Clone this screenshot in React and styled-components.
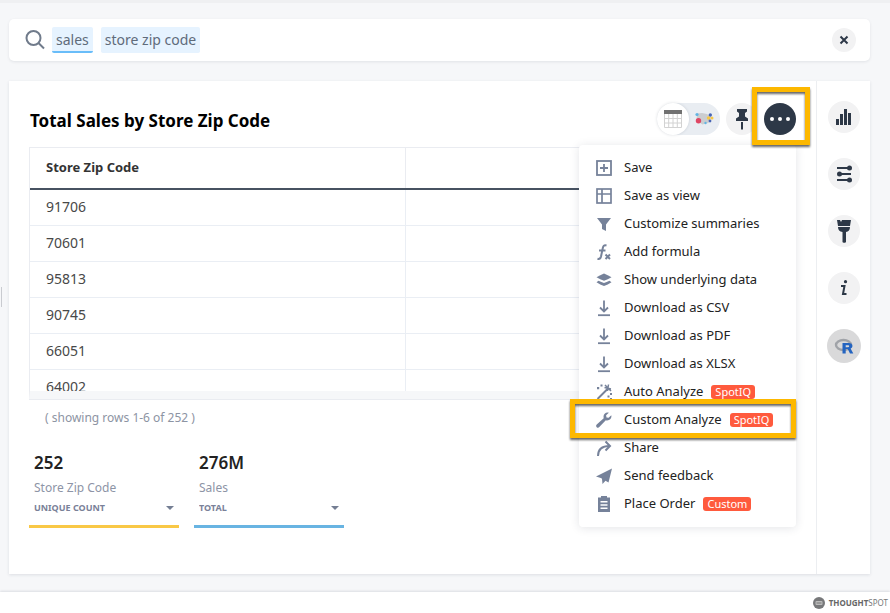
import React from "react";
import styled, { createGlobalStyle, css } from "styled-components";

const Global = createGlobalStyle`
  *, *::before, *::after { box-sizing: border-box; }
  body { margin: 0; background: #f6f7f9; font-family: "Noto Sans", "Open Sans", sans-serif; color: #222; }
  button, input, select { font: inherit; color: inherit; margin: 0; padding: 0; border: 0; background: none; }
`;

const dark = "#2d3847";
const slate = "#76829a";

const Page = styled.div`
  display: flex;
  flex-direction: column;
  min-height: 100vh;
  border-top: 3px solid #eff0f2;
  position: relative;
`;

const SearchBar = styled.form`
  display: flex;
  align-items: center;
  gap: 8px;
  height: 42px;
  margin: 16px 20px 0 9px;
  padding: 0 14px 0 16px;
  background: #fff;
  border-radius: 5px;
  box-shadow: 0 1px 3px rgba(40, 50, 70, 0.1);
`;

const Tokens = styled.div`
  display: flex;
  gap: 8px;
  margin-left: -1px;
`;

const Token = styled.span`
  height: 26px;
  padding: 1px 4px 0;
  font-size: 14px;
  line-height: 24px;
  color: #5f6b7b;
  background: #e6f3ff;
  border-radius: 2px;
  border-bottom: 2px solid ${(p) => (p.$active ? "#69bdf9" : "#e6f3ff")};
`;

const SearchInput = styled.input`
  flex: 1;
  min-width: 0;
  height: 26px;
  font-size: 14px;
  outline: none;
`;

const RoundButton = styled.button`
  display: flex;
  align-items: center;
  justify-content: center;
  flex: none;
  width: ${(p) => p.$size || 32}px;
  height: ${(p) => p.$size || 32}px;
  border-radius: 50%;
  background: ${(p) => p.$bg || "#f2f2f3"};
  color: ${dark};
  position: relative;
`;

const Card = styled.div`
  display: flex;
  flex: 1;
  margin: 20px 20px 18px 9px;
  background: #fff;
  box-shadow: 0 1px 3px rgba(40, 50, 70, 0.12);
`;

const Main = styled.main`
  flex: 1;
  min-width: 0;
  padding: 22px 20px 0;
`;

const Rail = styled.aside`
  display: flex;
  flex-direction: column;
  align-items: center;
  gap: 25px;
  width: 54px;
  padding-top: 20px;
  border-left: 1px solid #eceef1;
`;

const Header = styled.header`
  display: flex;
  align-items: center;
  justify-content: space-between;
  height: 32px;
`;

const Title = styled.h1`
  margin: 0 0 0 1px;
  padding-top: 4px;
  font-size: 17px;
  line-height: 28px;
  font-weight: 700;
  color: #000;
`;

const Actions = styled.div`
  display: flex;
  gap: 6px;
  position: relative;
`;

const Toggle = styled.div`
  display: flex;
  width: 63px;
  height: 32px;
  border-radius: 16px;
  background: #e9edf2;
`;

const ToggleSide = styled.button`
  display: flex;
  align-items: center;
  justify-content: center;
  width: 32px;
  height: 32px;
  border-radius: 50%;
  ${(p) =>
    p.$on &&
    css`
      background: #fff;
      box-shadow: 0 0 3px rgba(40, 50, 70, 0.16);
    `}
`;

const callout = css`
  content: "";
  position: absolute;
  border: 5px solid #fdb800;
  filter: drop-shadow(0 2px 1px rgba(0, 0, 0, 0.6));
  pointer-events: none;
`;

const MoreButton = styled(RoundButton)`
  z-index: 3;
  color: #fff;
  background: ${dark};
  &::before {
    content: "";
    position: absolute;
    inset: -12px -10px -6px -8px;
    background: #fff;
    z-index: -2;
  }
  &::after {
    ${callout}
    inset: -16px -14px -10px -12px;
  }
`;

const MoreDot = styled.span`
  position: absolute;
  inset: 0;
  z-index: -1;
  border-radius: 50%;
  background: ${dark};
`;

const Menu = styled.ul`
  position: absolute;
  z-index: 2;
  top: 42px;
  right: 0;
  width: 217px;
  margin: 0;
  padding: 9px 0;
  list-style: none;
  background: #fff;
  border-radius: 4px;
  box-shadow: 0 1px 10px rgba(40, 50, 70, 0.13);
`;

const MenuEntry = styled.li`
  position: relative;
  ${(p) =>
    p.$marked &&
    css`
      z-index: 1;
      &::after {
        ${callout}
        inset: -7px 0 -4px -9px;
      }
    `}
`;

const MenuButton = styled.button`
  display: flex;
  align-items: center;
  width: 100%;
  height: 28px;
  padding-left: 16px;
  font-size: 13px;
  line-height: 18px;
  text-align: left;
  white-space: nowrap;
  svg { flex: none; color: ${slate}; margin-right: 11px; }
`;

const MenuLabel = styled.span`
  padding-bottom: 2px;
`;

const Badge = styled.span`
  margin-left: 8px;
  padding: 0 4px;
  font-size: 11px;
  line-height: 14px;
  color: #fff;
  background: #ff5a3d;
  border-radius: 3px;
`;

const TableFrame = styled.div`
  height: 252px;
  margin: 12px 15px 0 0;
  border: 1px solid #eaecf1;
  border-bottom: 8px solid #f6f7f9;
  box-shadow: 0 1px 0 #eaecf1;
  overflow: hidden;
`;

const Table = styled.table`
  width: 100%;
  table-layout: fixed;
  border-collapse: collapse;
`;

const HeadCell = styled.th`
  height: 41px;
  padding: 0 16px 3px;
  text-align: left;
  font-size: 13px;
  font-weight: 700;
  color: #333;
  border-bottom: 2px solid #475261;
  & + & { border-left: 1px solid #eaecf1; }
`;

const Cell = styled.td`
  height: 36px;
  padding: 0 16px 1px;
  font-size: 14px;
  line-height: 20px;
  color: #484848;
  border-bottom: 1px solid #eaeef4;
  & + & { border-left: 1px solid #eaeef4; }
`;

const RowNote = styled.p`
  margin: 9px 0 0 16px;
  font-size: 12px;
  line-height: 20px;
  color: #8d94a3;
`;

const Metrics = styled.div`
  display: flex;
  gap: 15px;
  margin-top: 22px;
`;

const Metric = styled.section`
  display: flex;
  flex-direction: column;
  width: 150px;
  padding: 0 5px 9px;
  border-bottom: 3px solid ${(p) => p.$color};
`;

const MetricValue = styled.strong`
  font-size: 17px;
  line-height: 26px;
  font-weight: 600;
  color: #222;
`;

const MetricLabel = styled.label`
  font-size: 12px;
  line-height: 22px;
  margin-top: 1px;
  color: #8d94a6;
`;

const SelectWrap = styled.div`
  display: flex;
  align-items: center;
  color: #747e93;
`;

const Select = styled.select`
  appearance: none;
  flex: 1;
  height: 17px;
  font-size: 9px;
  line-height: 17px;
  font-weight: 700;
  color: #7a8198;
`;

const Footer = styled.footer`
  display: flex;
  align-items: center;
  justify-content: flex-end;
  gap: 4px;
  height: 21px;
  padding-right: 2px;
  background: #fff;
  box-shadow: 0 -1px 2px rgba(40, 50, 70, 0.12);
  font-size: 8px;
  line-height: 20px;
  color: #77787a;
`;

const Brand = styled.b`
  font-weight: 700;
  color: #666;
`;

const Light = styled.span`
  font-weight: 400;
`;

const Handle = styled.div`
  position: absolute;
  left: 1px;
  top: 284px;
  width: 1px;
  height: 20px;
  background: #c9cbd0;
`;

const Svg = ({ s = 18, box = 18, children }) => (
  <svg width={s} height={s} viewBox={`0 0 ${box} ${box}`} fill="currentColor" aria-hidden="true">
    {children}
  </svg>
);

const stroke = { fill: "none", stroke: "currentColor", strokeWidth: 2 };

const icons = {
  save: (
    <g {...stroke} strokeWidth="1.8">
      <rect x="2" y="2" width="14" height="14" />
      <path d="M9 5v8M5 9h8" />
    </g>
  ),
  view: (
    <g {...stroke} strokeWidth="1.7">
      <rect x="2" y="2" width="14" height="14" />
      <path d="M7 2v14M2 7h14" />
    </g>
  ),
  filter: <path d="M2 3h14l-5 6.500V16l-4-2V9.500z" />,
  formula: (
    <g {...stroke}>
      <path d="M11.500 2.500C8.900 1.800 8.300 3 7.800 5L6 13.500c-.5 2-1.500 2.800-3.500 2.300M4 7.500h6.500" />
      <path d="M10.500 11.500l4.500 4.500M15 11.500L10.500 16" />
    </g>
  ),
  layers: (
    <g>
      <path d="M9 2.500c2.500 1 5 2.200 7.500 3.700C14 7.700 11.500 9 9 9.700 6.500 9 4 7.700 1.500 6.200 4 4.700 6.500 3.500 9 2.500z" />
      <path d="M3.500 9.800C5.500 10.800 7.300 11.600 9 12c1.700-.4 3.500-1.200 5.500-2.200l2 1.400c-2.500 1.700-5 3-7.500 3.800-2.500-.8-5-2.100-7.500-3.800z" />
    </g>
  ),
  download: (
    <g {...stroke}>
      <path d="M9 1.500v10.500M5 8.500l4 4 4-4" strokeWidth="1.800" />
      <path d="M3 16.200h12" strokeWidth="1.800" />
    </g>
  ),
  wand: (
    <g>
      <path d="M2.500 16L13 5.500" {...stroke} />
      <path d="M9.500 4.500L16 6M13.500 1.500L12.500 8M10 2l6 6" fill="none" stroke="currentColor" strokeWidth="1.500" />
      <path d="M2 4h2.200v2.200H2zM5.500 1.500h2v2h-2zM12.500 12.500h2v2h-2zM15 10h2v2h-2zM15 15h2v2h-2z" />
    </g>
  ),
  wrench: (
    <path d="M16.300 4.200l-2.700 2.600-2.100-.4-.4-2.100 2.700-2.600c-2.600-.8-5.400 1-5.300 4l.2 1.500-7 6.300c-.8.8-.8 1.900 0 2.700.8.700 1.900.7 2.600-.1l6.500-6.900c3.300.9 6.300-1.800 5.500-5z" />
  ),
  share: (
    <g {...stroke}>
      <path d="M3 17c0-6 2.500-10 11.500-10" />
      <path d="M10.500 2.500L15 7l-4.500 4.500" />
    </g>
  ),
  send: <path d="M17 1.500L1 9.500l5.500 1.700L7 12l.5 5 3-3.200 3 1.700z" />,
  order: (
    <path fillRule="evenodd" d="M3 2.500h3V1h6v1.500h3V17H3zM5.500 6v1.500h7V6zm0 3.200v1.500h7V9.200zm0 3.200v1.500h7v-1.500z" />
  ),
};

const items = [
  ["save", "Save"],
  ["view", "Save as view"],
  ["filter", "Customize summaries"],
  ["formula", "Add formula"],
  ["layers", "Show underlying data"],
  ["download", "Download as CSV"],
  ["download", "Download as PDF"],
  ["download", "Download as XLSX"],
  ["wand", "Auto Analyze", "SpotIQ"],
  ["wrench", "Custom Analyze", "SpotIQ", true],
  ["share", "Share"],
  ["send", "Send feedback"],
  ["order", "Place Order", "Custom"],
];

const zips = ["91706", "70601", "95813", "90745", "66051", "64002"];

const metrics = [
  { id: "zip", value: "252", label: "Store Zip Code", mode: "UNIQUE COUNT", color: "#f9c846" },
  { id: "sales", value: "276M", label: "Sales", mode: "TOTAL", color: "#68b4e2" },
];

export default function App() {
  return (
    <Page>
      <Global />
      <SearchBar onSubmit={(e) => e.preventDefault()}>
        <Svg s={20} box={20}>
          <g fill="none" stroke="#707b8b" strokeWidth="2">
            <circle cx="8.500" cy="8" r="7" />
            <path d="M13.500 13l5.500 5.500" />
          </g>
        </Svg>
        <Tokens>
          <Token $active>sales</Token>
          <Token>store zip code</Token>
        </Tokens>
        <SearchInput aria-label="Search" />
        <RoundButton type="button" $size={24} aria-label="Clear search">
          <Svg s={10} box={10}>
            <path d="M1.500 1.500l7 7M8.500 1.500l-7 7" {...stroke} />
          </Svg>
        </RoundButton>
      </SearchBar>

      <Card>
        <Main>
          <Header>
            <Title>Total Sales by Store Zip Code</Title>
            <Actions>
              <Toggle>
                <ToggleSide $on aria-label="Table view">
                  <Svg s={20} box={20}>
                    <path d="M1.500 5v13.500h17V5M1.500 9.500h17M1.500 14h17M5.700 5v13.500M10 5v13.500M14.300 5v13.500" fill="none" stroke="#d2d2d2" />
                    <path d="M1 1h18v4H1z" fill="#717171" />
                  </Svg>
                </ToggleSide>
                <ToggleSide aria-label="Map view">
                  <Svg s={20} box={20}>
                    <path d="M3 4.500l5-.5 5 1 2 1.500 3 2-2 1.500-1.500 4-3 .5-3 1-3-2-3-2z" fill="#cbcdd0" />
                    <circle cx="4.500" cy="11.700" r="2.700" fill="#df4664" />
                    <circle cx="3" cy="5.500" r="1.600" fill="#62b4e3" />
                    <circle cx="16.300" cy="6" r="1.700" fill="#4865b5" />
                    <circle cx="14.500" cy="9" r="1.700" fill="#f7c744" />
                    <circle cx="18" cy="9" r="1.500" fill="#f7c744" />
                    <circle cx="16" cy="12" r="1.400" fill="#4865b5" />
                    <circle cx="11.500" cy="14" r="1.200" fill="#62b4e3" />
                  </Svg>
                </ToggleSide>
              </Toggle>
              <RoundButton aria-label="Pin">
                <Svg s={22} box={22}>
                  <path d="M6 1h10v2.500l-2 1.500v3.500l3 2V13H5v-2.500l3-2V5L6 3.500zM10 14h2v7.500h-2z" />
                </Svg>
              </RoundButton>
              <MoreButton aria-label="More actions">
                <MoreDot />
                <Svg s={22} box={22}>
                  <circle cx="3" cy="11" r="2" />
                  <circle cx="11" cy="11" r="2" />
                  <circle cx="19" cy="11" r="2" />
                </Svg>
              </MoreButton>
              <Menu>
                {items.map(([icon, label, badge, marked]) => (
                  <MenuEntry key={label} $marked={marked}>
                    <MenuButton>
                      <Svg>{icons[icon]}</Svg>
                      <MenuLabel>{label}</MenuLabel>
                      {badge && <Badge>{badge}</Badge>}
                    </MenuButton>
                  </MenuEntry>
                ))}
              </Menu>
            </Actions>
          </Header>

          <TableFrame>
            <Table>
              <thead>
                <tr>
                  <HeadCell>Store Zip Code</HeadCell>
                  <HeadCell />
                </tr>
              </thead>
              <tbody>
                {zips.map((z) => (
                  <tr key={z}>
                    <Cell>{z}</Cell>
                    <Cell />
                  </tr>
                ))}
              </tbody>
            </Table>
          </TableFrame>
          <RowNote>( showing rows 1-6 of 252 )</RowNote>

          <Metrics>
            {metrics.map((m) => (
              <Metric key={m.id} $color={m.color}>
                <MetricValue>{m.value}</MetricValue>
                <MetricLabel htmlFor={m.id}>{m.label}</MetricLabel>
                <SelectWrap>
                  <Select id={m.id} defaultValue={m.mode}>
                    <option>{m.mode}</option>
                  </Select>
                  <Svg s={8} box={8}>
                    <path d="M0 2h8L4 6z" />
                  </Svg>
                </SelectWrap>
              </Metric>
            ))}
          </Metrics>
        </Main>

        <Rail>
          <RoundButton aria-label="Chart type">
            <Svg s={18} box={18}>
              <path d="M1 11h3v6H1zM5 6h3v11H5zM9 1h3v16H9zM13 5h3v12h-3z" />
            </Svg>
          </RoundButton>
          <RoundButton aria-label="Configure">
            <Svg s={18} box={18}>
              <path d="M2 3h12M4 9h12M2 15h12" {...stroke} />
              <circle cx="14.500" cy="3" r="2.500" />
              <circle cx="4.500" cy="9" r="2.500" />
              <circle cx="14.500" cy="15" r="2.500" />
            </Svg>
          </RoundButton>
          <RoundButton aria-label="Style">
            <Svg s={24} box={24}>
              <path d="M5 1h3l1 2 1-2h9l-1 6H6zM6 8h12c0 3-1.500 4.500-4 5V23c0 1-3.500 1-3.500 0V13C7.500 12.500 6 11 6 8z" />
            </Svg>
          </RoundButton>
          <RoundButton aria-label="Information">
            <Svg s={18} box={18}>
              <circle cx="10.500" cy="2.700" r="1.600" />
              <path d="M6 7h3.500l-1.500 8h3.500" {...stroke} />
            </Svg>
          </RoundButton>
          <RoundButton $size={34} $bg="#d9d9da" aria-label="R analysis">
            <Svg s={20} box={20}>
              <ellipse cx="9.500" cy="9" rx="7.500" ry="5" fill="none" stroke="#a0a3a8" strokeWidth="2.400" />
              <path fill="#2464c0" fillRule="evenodd" d="M8.500 7h6.300c4.300 0 4.800 4.500 1.800 5.500l2.700 5H16l-2.300-4.500h-2v4.500H8.500zm3.200 2.200v2h2.500c1.400 0 1.400-2 0-2z" />
            </Svg>
          </RoundButton>
        </Rail>
      </Card>

      <Footer>
        <Svg s={12} box={12}>
          <circle cx="6" cy="6" r="6" />
          <rect x="2.500" y="4" width="7" height="4" rx="1" fill="#bbb" />
          <path d="M3.500 6h5" stroke="#777" />
        </Svg>
        <span>
          <Brand>THOUGHT</Brand>
          <Light>SPOT</Light>
        </span>
      </Footer>
      <Handle />
    </Page>
  );
}
